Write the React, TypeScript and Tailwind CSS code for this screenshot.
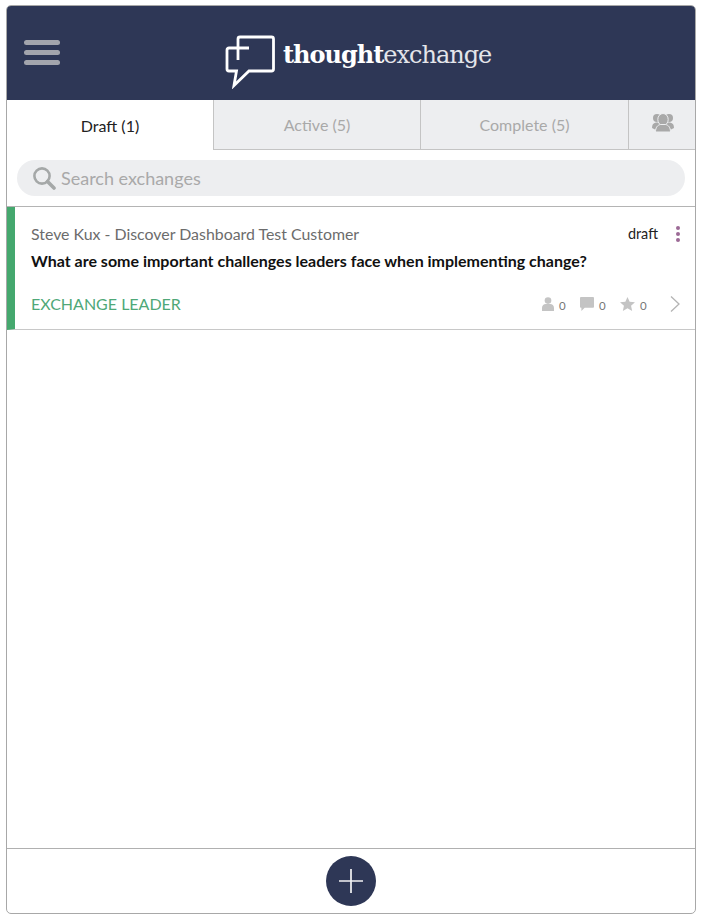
import React from "react";

function Logo() {
  return (
    <svg width="50" height="54" viewBox="0 0 50 54" fill="none" stroke="white" strokeWidth="2.800" strokeLinejoin="miter" className="shrink-0">
      <path d="M24 13H4a2 2 0 0 0-2 2V34a2 2 0 0 0 2 2H11.500L9 50.500 24 36H46.500a2 2 0 0 0 2-2V4a2 2 0 0 0-2-2H15a2 2 0 0 0-2 2V25" />
    </svg>
  );
}

function Tab({ label, className }: { label: string; className: string }) {
  return (
    <div className={`flex items-center justify-center h-[50px] pt-[1px] bg-[#edeef0] text-[#a9a9a9] border-b border-[#c4c4c4] text-[16px] ${className}`}>
      {label}
    </div>
  );
}

function Stat({ icon, width }: { icon: React.ReactNode; width: string }) {
  return (
    <div className={`flex items-center gap-[5px] ${width}`}>
      {icon}
      <span className="text-[11.5px] text-[#777] leading-none mt-[3px]">0</span>
    </div>
  );
}

export default function App() {
  return (
    <div className="w-[701px] h-[922px] bg-white pt-[5px] pl-[6px] font-['Lato','Noto_Sans',sans-serif]">
      <div className="w-[690px] h-[909px] border border-[#a8a8a8] rounded-[5px] overflow-hidden flex flex-col">
        <header className="h-[94px] shrink-0 bg-[#2e3756] flex items-center relative">
          <div className="ml-[17px] w-[36px] flex flex-col gap-[5.500px] mt-[-1px]">
            <span className="h-[4.500px] rounded-full bg-[#a3a5ad]" />
            <span className="h-[4.500px] rounded-full bg-[#a3a5ad]" />
            <span className="h-[4.500px] rounded-full bg-[#a3a5ad]" />
          </div>
          <div className="ml-[165px] flex items-center mt-[18px]">
            <Logo />
            <div className="ml-[8px] mt-[-15px] text-white text-[24px] leading-none tracking-[-1px] font-['DejaVu_Serif',serif] whitespace-nowrap">
              <span className="font-bold">thought</span>
              <span className="font-light text-[#e4e5ea]">exchange</span>
            </div>
          </div>
        </header>

        <div className="flex shrink-0">
          <div className="w-[206px] h-[50px] pt-[1px] flex items-center justify-center text-[16px] text-[#222]">Draft (1)</div>
          <Tab label="Active (5)" className="w-[207px] border-l" />
          <Tab label="Complete (5)" className="w-[208px] border-l" />
          <div className="flex-1 h-[50px] flex items-center justify-center bg-[#edeef0] border-b border-l border-[#c4c4c4]">
            <svg width="22" height="19" viewBox="0 0 22 19" fill="#a9a9a9" className="mt-[-4px] mr-[-1px]">
              <circle cx="5" cy="5" r="4" />
              <circle cx="17" cy="5" r="4" />
              <path d="M0 15c0-3 1-5 4-5.500h14c3 .5 4 2.500 4 5.500l-3 1.500H3z" />
              <ellipse cx="11" cy="6.500" rx="5.200" ry="6" stroke="#edeef0" strokeWidth="1" />
              <path d="M3.500 19c0-4.500 2-7 5-7.500h5c3 .5 5 3 5 7.500z" stroke="#edeef0" strokeWidth="1" />
            </svg>
          </div>
        </div>

        <div className="h-[57px] shrink-0 px-[10px] pt-[10px] border-b border-[#b4b4b4]">
          <div className="h-[36px] rounded-full bg-[#edeef0] flex items-center pl-[15px]">
            <svg width="24" height="24" viewBox="0 0 24 24" fill="none" stroke="#a5a8a8" className="shrink-0">
              <circle cx="10" cy="10" r="7.600" strokeWidth="2.600" />
              <path d="M15.500 15.500 22 22" strokeWidth="3.600" strokeLinecap="round" />
            </svg>
            <span className="ml-[5px] text-[18px] text-[#a9a9a9]">Search exchanges</span>
          </div>
        </div>

        <div className="h-[123px] shrink-0 border-b border-[#c8c8c8] border-l-[8px] border-l-[#45a86e] pl-[16px] pr-[15px] pt-[18px] flex flex-col">
          <div className="flex items-center justify-between h-[18px]">
            <span className="text-[15.900px] text-[#6c6c6c]">Steve Kux - Discover Dashboard Test Customer</span>
            <div className="flex items-center">
              <span className="text-[14.400px] text-[#222]">draft</span>
              <div className="ml-[18px] w-[4px] flex flex-col gap-[2px]">
                <span className="h-[4px] rounded-full bg-[#9c6a96]" />
                <span className="h-[4px] rounded-full bg-[#9c6a96]" />
                <span className="h-[4px] rounded-full bg-[#9c6a96]" />
              </div>
            </div>
          </div>
          <div className="mt-[9px] text-[16px] font-bold text-[#111] leading-[18px]">
            What are some important challenges leaders face when implementing change?
          </div>
          <div className="mt-[25px] flex items-center justify-between h-[18px]">
            <span className="text-[16px] text-[#4fa878]">EXCHANGE LEADER</span>
            <div className="flex items-center">
              <Stat
                width="w-[38px]"
                icon={
                  <svg width="12" height="14" viewBox="0 0 13 15" fill="#c4c4c4">
                    <circle cx="6.500" cy="3.800" r="3.600" />
                    <path d="M0 15v-3.500C0 9 2 7.500 4 7.500h5c2 0 4 1.500 4 4V15z" />
                  </svg>
                }
              />
              <Stat
                width="w-[40px]"
                icon={
                  <svg width="14" height="14" viewBox="0 0 15 15" fill="#c4c4c4">
                    <path d="M1 0h13a1 1 0 0 1 1 1v9.500a1 1 0 0 1-1 1H5L1.500 15V11.500H1a1 1 0 0 1-1-1V1a1 1 0 0 1 1-1z" />
                  </svg>
                }
              />
              <Stat
                width="w-[50px]"
                icon={
                  <svg width="15" height="14" viewBox="0 0 16 15" fill="#c4c4c4">
                    <path d="M8 0l2.300 5.100 5.700.6-4.200 3.700L13 15 8 12.100 3 15l1.200-5.600L0 5.700l5.700-.6z" />
                  </svg>
                }
              />
              <svg width="10" height="16" viewBox="0 0 10 16" fill="none" stroke="#b4b4b4" strokeWidth="1.300">
                <path d="M1 .5l8 7.500-8 7.500" />
              </svg>
            </div>
          </div>
        </div>

        <div className="flex-1" />

        <footer className="h-[65px] shrink-0 border-t border-[#b0b0b0] flex items-center justify-center">
          <div className="w-[50px] h-[50px] rounded-full bg-[#2e3756] flex items-center justify-center">
            <svg width="26" height="26" viewBox="0 0 26 26" stroke="#f2f2f4" strokeWidth="1.700">
              <path d="M13 1v24M1 13h24" />
            </svg>
          </div>
        </footer>
      </div>
    </div>
  );
}
